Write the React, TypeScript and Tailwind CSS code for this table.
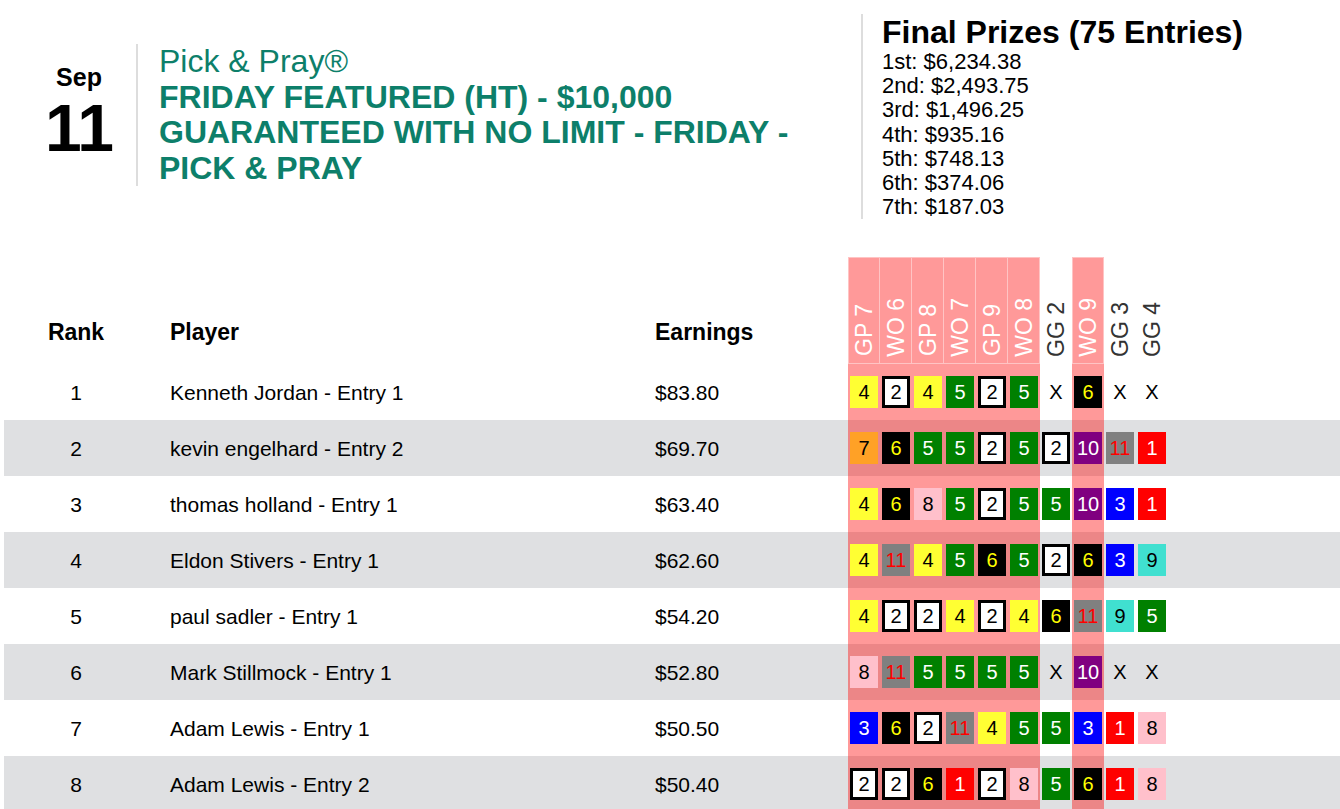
import React from 'react';

type Pick = number | 'X';

interface Entry {
  rank: number;
  player: string;
  earnings: string;
  picks: Pick[];
}

const races = [
  { label: 'GP 7', hot: true },
  { label: 'WO 6', hot: true },
  { label: 'GP 8', hot: true },
  { label: 'WO 7', hot: true },
  { label: 'GP 9', hot: true },
  { label: 'WO 8', hot: true },
  { label: 'GG 2', hot: false },
  { label: 'WO 9', hot: true },
  { label: 'GG 3', hot: false },
  { label: 'GG 4', hot: false },
];

const entries: Entry[] = [
  { rank: 1, player: 'Kenneth Jordan - Entry 1', earnings: '$83.80', picks: [4, 2, 4, 5, 2, 5, 'X', 6, 'X', 'X'] },
  { rank: 2, player: 'kevin engelhard - Entry 2', earnings: '$69.70', picks: [7, 6, 5, 5, 2, 5, 2, 10, 11, 1] },
  { rank: 3, player: 'thomas holland - Entry 1', earnings: '$63.40', picks: [4, 6, 8, 5, 2, 5, 5, 10, 3, 1] },
  { rank: 4, player: 'Eldon Stivers - Entry 1', earnings: '$62.60', picks: [4, 11, 4, 5, 6, 5, 2, 6, 3, 9] },
  { rank: 5, player: 'paul sadler - Entry 1', earnings: '$54.20', picks: [4, 2, 2, 4, 2, 4, 6, 11, 9, 5] },
  { rank: 6, player: 'Mark Stillmock - Entry 1', earnings: '$52.80', picks: [8, 11, 5, 5, 5, 5, 'X', 10, 'X', 'X'] },
  { rank: 7, player: 'Adam Lewis - Entry 1', earnings: '$50.50', picks: [3, 6, 2, 11, 4, 5, 5, 3, 1, 8] },
  { rank: 8, player: 'Adam Lewis - Entry 2', earnings: '$50.40', picks: [2, 2, 6, 1, 2, 8, 5, 6, 1, 8] },
];

const prizes = ['1st: $6,234.38', '2nd: $2,493.75', '3rd: $1,496.25', '4th: $935.16', '5th: $748.13', '6th: $374.06', '7th: $187.03'];

// saddle cloth colours
const cloth: Record<number, string> = {
  1: 'bg-[#ff0000] text-white',
  2: 'bg-white text-black border-[3px] border-black',
  3: 'bg-[#0000ff] text-white',
  4: 'bg-[#ffff33] text-black',
  5: 'bg-[#008000] text-white',
  6: 'bg-black text-[#ffff00]',
  7: 'bg-[#ffa126] text-black',
  8: 'bg-[#ffc0cb] text-black',
  9: 'bg-[#40e0d0] text-black',
  10: 'bg-[#800080] text-white',
  11: 'bg-[#808080] text-[#ff0000]',
};

function PickBox({ pick }: { pick: Pick }) {
  if (pick === 'X') return <span className="text-[20px] text-black">X</span>;
  return (
    <div className={`w-[28px] h-[32px] flex items-center justify-center text-[20px] leading-none ${cloth[pick]}`}>
      {pick}
    </div>
  );
}

export default function App() {
  return (
    <div className="min-h-screen bg-white text-black overflow-hidden" style={{ fontFamily: '"Liberation Sans", Arial, sans-serif' }}>
      <div className="flex items-start">
        <div className="w-[861px] flex items-start mt-[44px]">
          <div className="w-[114px] ml-[22px] mt-[19px] flex flex-col items-center gap-[4px]">
            <div className="text-[25px] font-bold leading-[28px]">Sep</div>
            <div className="text-[66px] font-bold leading-[66px] tracking-[-1px]">11</div>
          </div>
          <div className="border-l-2 border-[#dddddd] pl-[21px] w-[683px] text-[#0d7f6a]">
            <div className="w-[660px] text-[32px] leading-[35.5px]">
              <div>Pick &amp; Pray®</div>
              <div className="font-bold">FRIDAY FEATURED (HT) - $10,000 GUARANTEED WITH NO LIMIT - FRIDAY - PICK &amp; PRAY</div>
            </div>
          </div>
        </div>
        <div className="mt-[14px] border-l-2 border-[#dddddd] pl-[19px]">
          <div className="text-[32px] font-bold leading-[36px]">Final Prizes (75 Entries)</div>
          {prizes.map(p => (
            <div key={p} className="text-[22px] leading-[24.2px]">{p}</div>
          ))}
        </div>
      </div>

      <div className="mt-[38px] ml-[4px]">
        <div className="flex h-[107px] text-[23px] font-bold">
          <div className="w-[144px] flex items-end justify-center pb-[15px]">Rank</div>
          <div className="w-[507px] flex items-end pl-[22px] pb-[15px]">Player</div>
          <div className="w-[193px] flex items-end pb-[15px]">Earnings</div>
          {races.map((r, i) => (
            <div
              key={r.label}
              className={`w-[32px] flex flex-col justify-end items-center pb-[7px] font-normal ${
                r.hot ? 'bg-[#ff9999] text-white border-y border-r border-[#ffc4c4]' : 'text-[#333333]'
              } ${r.hot && (i === 0 || !races[i - 1].hot) ? 'border-l' : ''}`}
            >
              <span className="[writing-mode:vertical-rl] rotate-180 leading-[32px] whitespace-nowrap">{r.label}</span>
            </div>
          ))}
        </div>

        {entries.map((e, idx) => (
          <div key={e.rank} className={`flex h-[56px] items-center text-[21px] ${idx % 2 === 1 ? 'bg-[#dfe0e2]' : ''}`}>
            <div className="w-[144px] text-center">{e.rank}</div>
            <div className="w-[507px] pl-[22px]">{e.player}</div>
            <div className="w-[193px]">{e.earnings}</div>
            {e.picks.map((p, i) => (
              <div
                key={i}
                className={`w-[32px] h-full flex items-center justify-center ${races[i].hot ? 'bg-[rgba(255,0,0,0.4)]' : ''}`}
              >
                <PickBox pick={p} />
              </div>
            ))}
          </div>
        ))}
      </div>
    </div>
  );
}
